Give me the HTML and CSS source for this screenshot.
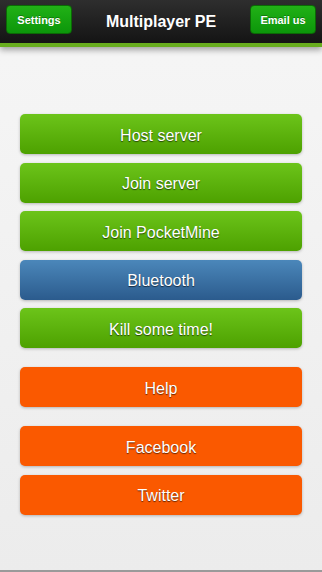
FILE: index.html
```html
<!DOCTYPE html>
<html lang="en">
<head>
    <meta charset="UTF-8">
    <meta name="viewport" content="width=device-width, initial-scale=1.0">
    <title>Multiplayer PE</title>
    <link rel="stylesheet" href="styles.css">
</head>
<body>
    <div class="topbar">
        <button class="nav-btn">Settings</button>
        <h1 class="title">Multiplayer PE</h1>
        <button class="nav-btn">Email us</button>
    </div>
    <div class="menu">
        <div class="group">
            <button class="btn green">Host server</button>
            <button class="btn green">Join server</button>
            <button class="btn green">Join PocketMine</button>
            <button class="btn blue">Bluetooth</button>
            <button class="btn green">Kill some time!</button>
        </div>
        <div class="group">
            <button class="btn orange">Help</button>
        </div>
        <div class="group">
            <button class="btn orange">Facebook</button>
            <button class="btn orange">Twitter</button>
        </div>
    </div>
</body>
</html>
```

FILE: styles.css
```css
body {
    margin: 0;
    height: 572px;
    box-sizing: border-box;
    font-family: "Liberation Sans", Arial, sans-serif;
    background: linear-gradient(#f6f6f6, #ececec);
    border-bottom: 2px solid #9a9a9a;
    overflow: hidden;
}
.topbar {
    height: 38px;
    display: flex;
    align-items: flex-start;
    justify-content: space-between;
    padding: 5px 6px 0;
    background: linear-gradient(#2e2e2e, #141414);
    border-bottom: 4px solid #68ad1e;
    box-shadow: 0 3px 6px rgba(0, 0, 0, 0.35);
}
.nav-btn {
    width: 66px;
    height: 29px;
    border: 1px solid #0b6a05;
    border-radius: 4px;
    background: linear-gradient(#21b116, #0c960a);
    color: #fff;
    font-family: inherit;
    font-size: 11px;
    font-weight: bold;
    text-shadow: 0 -1px 0 rgba(0, 0, 0, 0.3);
    padding: 0;
}
.title {
    margin: 0;
    padding-top: 8px;
    color: #fff;
    font-size: 16px;
    font-weight: bold;
}
.menu {
    display: flex;
    flex-direction: column;
    gap: 19px;
    padding: 67px 20px 0 20px;
}
.group {
    display: flex;
    flex-direction: column;
    gap: 8.5px;
}
.btn {
    height: 40px;
    border: none;
    border-radius: 5px;
    color: #fff;
    font-family: inherit;
    font-size: 16px;
    text-shadow: 0 1px 1px rgba(0, 0, 0, 0.6);
    box-shadow: 0 1px 3px rgba(0, 0, 0, 0.25);
    padding: 3px 0 0;
}
.green {
    background: linear-gradient(#6cc41a, #4da100);
}
.blue {
    background: linear-gradient(#4b87ba, #2b5b8d);
}
.orange {
    background: #fa5900;
}
```
